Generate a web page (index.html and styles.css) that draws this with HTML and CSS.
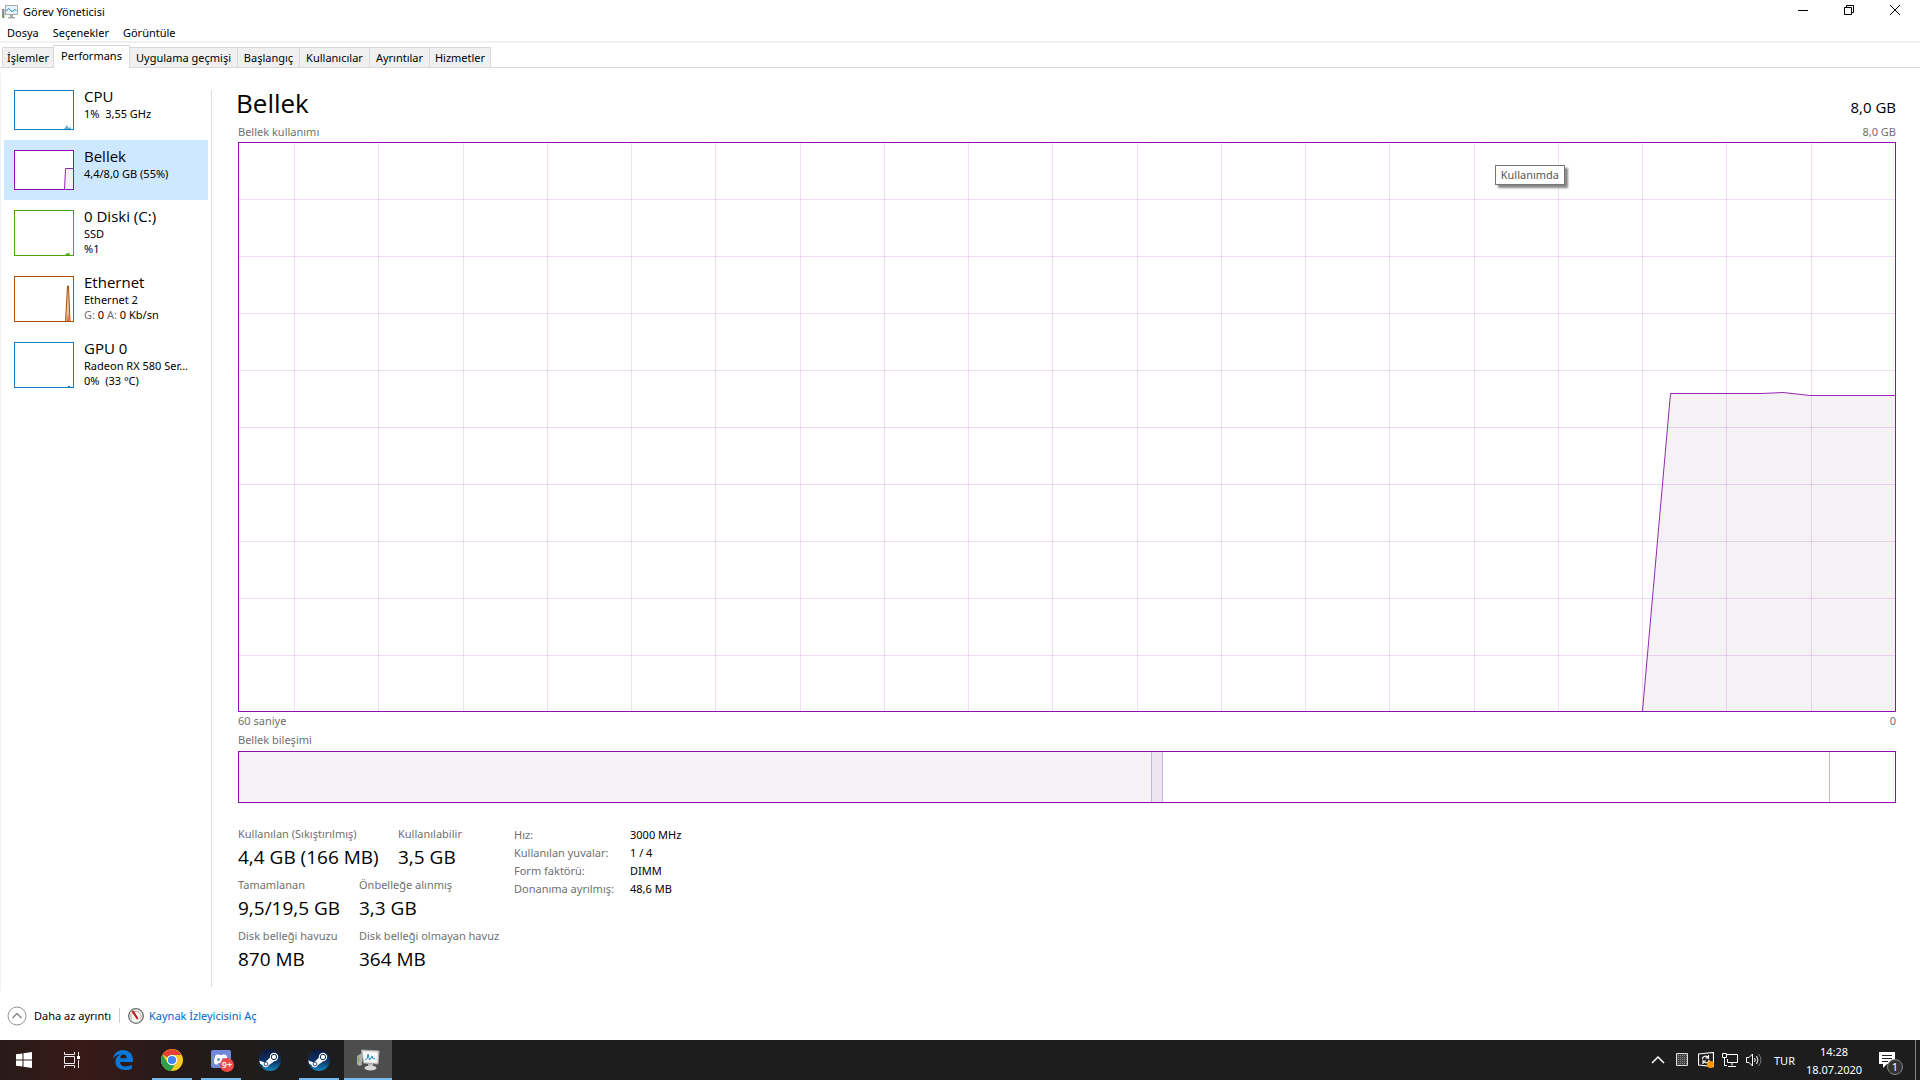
FILE: index.html
```html
<!DOCTYPE html>
<html lang="tr">
<head>
<meta charset="utf-8">
<title>Görev Yöneticisi</title>
<link rel="stylesheet" href="styles.css">
</head>
<body>
<div class="window">
  <header class="titlebar">
    <svg class="app-icon" viewBox="0 0 16 14"><path d="M0 4h2.500v9H0z" fill="#8a9094"/><path d="M.5 10h1.500v2H.5z" fill="#63b345"/><path d="M3.500.5h12v9h-12z" fill="#e6f4fc" stroke="#a5aaac"/><path d="M4.500 6l2-2.500 2 1.500 2 2 2-2.500 2 1" fill="none" stroke="#2384b8"/><path d="M8 10h3v2h2v1.500H6V12h2z" fill="#a5aaac"/></svg>
    <h1 class="window-title">Görev Yöneticisi</h1>
    <div class="window-controls">
      <button class="control" aria-label="Simge durumuna küçült"><svg viewBox="0 0 12 12"><path d="M1 6.500h10" stroke="#000"/></svg></button>
      <button class="control" aria-label="Önceki boyut"><svg viewBox="0 0 12 12"><path d="M1.500 3.500h7v7h-7zM3.500 3.500v-2h7v7h-2" fill="none" stroke="#000"/></svg></button>
      <button class="control" aria-label="Kapat"><svg viewBox="0 0 12 12"><path d="M1 1l10 10M11 1L1 11" stroke="#000"/></svg></button>
    </div>
  </header>
  <nav class="menubar">
    <button>Dosya</button><button>Seçenekler</button><button>Görüntüle</button>
  </nav>
  <div class="tabs" role="tablist">
    <button class="tab tab-processes" role="tab">İşlemler</button>
    <button class="tab tab-performance active" role="tab" aria-selected="true">Performans</button>
    <button class="tab tab-history" role="tab">Uygulama geçmişi</button>
    <button class="tab tab-startup" role="tab">Başlangıç</button>
    <button class="tab tab-users" role="tab">Kullanıcılar</button>
    <button class="tab tab-details" role="tab">Ayrıntılar</button>
    <button class="tab tab-services" role="tab">Hizmetler</button>
  </div>
  <div class="content">
    <aside class="sidebar">
      <button class="resource">
        <svg class="thumb cpu" viewBox="1 1 58 38"><path d="M50 39l2-3 1-1 1 2 1 1 2-1v2z" fill="#6fb0d9"/></svg>
        <span class="info"><span class="name">CPU</span><span>1%&nbsp; 3,55 GHz</span></span>
      </button>
      <button class="resource selected">
        <svg class="thumb memory" viewBox="1 1 58 38"><path d="M50.500 40l1-21.500H61V40" fill="#f4f2f4" stroke="#9528b4"/></svg>
        <span class="info"><span class="name">Bellek</span><span>4,4/8,0 GB (55%)</span></span>
      </button>
      <button class="resource">
        <svg class="thumb tall disk" viewBox="1 1 58 44"><path d="M51 45l2-2 1 1 1-2 1 3z" fill="#4da60c"/></svg>
        <span class="info"><span class="name">0 Diski (C:)</span><span>SSD</span><span>%1</span></span>
      </button>
      <button class="resource">
        <svg class="thumb tall ethernet" viewBox="1 1 58 44"><path d="M51.500 46l2-36h1l1.500 36" fill="#e5c8ae" stroke="#a74f01"/><path d="M53 45l1-8 1 8z" fill="#f05a28"/></svg>
        <span class="info"><span class="name">Ethernet</span><span>Ethernet 2</span><span><i>G:</i> 0 <i>A:</i> 0 Kb/sn</span></span>
      </button>
      <button class="resource">
        <svg class="thumb tall gpu" viewBox="1 1 58 44"><path d="M54 44h2v1h-2z" fill="#117dbb"/></svg>
        <span class="info"><span class="name">GPU 0</span><span>Radeon RX 580 Ser...</span><span>0%&nbsp; (33 °C)</span></span>
      </button>
    </aside>
    <main class="detail">
      <div class="heading"><h2>Bellek</h2><span class="capacity">8,0 GB</span></div>
      <div class="caption chart-caption"><span>Bellek kullanımı</span><span>8,0 GB</span></div>
      <div class="chart-wrap">
        <svg class="chart" viewBox="0 0 1656 568" preserveAspectRatio="none">
          <path class="area" d="M1403.500 568L1431.500 250.500H1523L1544 249.500 1571 252.500H1656V568z"/>
          <path class="grid" d="M0 56.500H1656M0 113.500H1656M0 170.500H1656M0 227.500H1656M0 284.500H1656M0 341.500H1656M0 398.500H1656M0 455.500H1656M0 512.500H1656"/>
          <path class="grid" d="M55.500 0V568M139.500 0V568M224.500 0V568M308.500 0V568M392.500 0V568M476.500 0V568M561.500 0V568M645.500 0V568M729.500 0V568M813.500 0V568M898.500 0V568M982.500 0V568M1066.500 0V568M1150.500 0V568M1235.500 0V568M1319.500 0V568M1403.500 0V568M1487.500 0V568M1572.500 0V568"/>
          <path class="line" d="M1403.500 568L1431.500 250.500H1523L1544 249.500 1571 252.500H1656"/>
        </svg>
        <div class="tooltip" role="tooltip">Kullanımda</div>
      </div>
      <div class="caption axis"><span>60 saniye</span><span>0</span></div>
      <div class="caption composition-caption">Bellek bileşimi</div>
      <div class="composition"><div class="in-use"></div><div class="modified"></div><div class="standby"></div><div class="free"></div></div>
      <div class="stats">
        <div class="figures">
          <dl class="figure-row"><div class="wide"><dt>Kullanılan (Sıkıştırılmış)</dt><dd>4,4 GB (166 MB)</dd></div><div><dt>Kullanılabilir</dt><dd>3,5 GB</dd></div></dl>
          <dl class="figure-row"><div><dt>Tamamlanan</dt><dd>9,5/19,5 GB</dd></div><div><dt>Önbelleğe alınmış</dt><dd>3,3 GB</dd></div></dl>
          <dl class="figure-row"><div><dt>Disk belleği havuzu</dt><dd>870 MB</dd></div><div><dt>Disk belleği olmayan havuz</dt><dd>364 MB</dd></div></dl>
        </div>
        <table class="specs">
          <tr><th scope="row">Hız:</th><td>3000 MHz</td></tr>
          <tr><th scope="row">Kullanılan yuvalar:</th><td>1 / 4</td></tr>
          <tr><th scope="row">Form faktörü:</th><td>DIMM</td></tr>
          <tr><th scope="row">Donanıma ayrılmış:</th><td>48,6 MB</td></tr>
        </table>
      </div>
    </main>
  </div>
  <footer class="statusbar">
    <button class="fewer"><svg viewBox="0 0 20 20"><circle cx="10" cy="10" r="9" fill="none" stroke="#949494"/><path d="M5.500 12L10 7.500l4.500 4.500" fill="none" stroke="#8a8a8a" stroke-width="1.500"/></svg>Daha az ayrıntı</button>
    <a class="monitor" href="#"><svg viewBox="0 0 16 16"><circle cx="8" cy="8" r="7.300" fill="#f7f5f2" stroke="#6d6d6d" stroke-width="1.300"/><path d="M4 11.500a5 5 0 1 1 8 0" fill="none" stroke="#b9a99b"/><path d="M3.500 3.500l2-1 5 8-1.500 1z" fill="#c5131b"/></svg>Kaynak İzleyicisini Aç</a>
  </footer>
</div>
<div class="taskbar">
  <button class="task" aria-label="Başlat"><svg viewBox="0 0 16 16" width="16" height="16" fill="#fff"><path d="M0 2.300L6.500 1.400V7.500H0zM7.500 1.200L16 0v7.500H7.500zM0 8.500h6.500v6.100L0 13.700zM7.500 8.500H16V16l-8.500-1.200z"/></svg></button>
  <button class="task" aria-label="Görev Görünümü"><svg viewBox="0 0 16 16" width="16" height="16" fill="none" stroke="#eee"><path d="M.5 0v2.500h10V0M.5 16v-2.500h10V16M.5 4.500h10v7H.5zM14.500 0v4M14.500 8v8"/><path d="M13 4h3v3h-3z" fill="#fff" stroke="none"/></svg></button>
  <div class="apps">
    <button class="task" aria-label="Edge"><svg viewBox="0 0 20 20" width="20" height="20"><path d="M0 9C.8 3.500 4.600 0 10 0c6.200 0 10 4.300 10 10v2H7c.2 3.100 2.600 4.500 5.800 4.500 2.300 0 4.300-.7 6-1.700v4.100C17 19.700 14.600 20 12 20c-5.400 0-9.600-2.900-9.600-8.200 0-3.300 2-6 5-7.200C4.300 4.700 1.700 6.200 0 9zm7.200-.8h6.400C13.600 6 12.400 4.600 10.500 4.600S7.500 6 7.200 8.200z" fill="#0a78d7"/></svg></button>
    <button class="task running" aria-label="Chrome"><svg viewBox="0 0 22 22" width="22" height="22"><circle cx="11" cy="11" r="11" fill="#fbc926"/><path d="M11 11L1.500 5.500A11 11 0 0 1 20.500 6H11z" fill="#e34133"/><path d="M1.500 5.500A11 11 0 0 0 10 22l5-8.600-8.500.4z" fill="#2ba14b"/><circle cx="11" cy="11" r="5.200" fill="#fff"/><circle cx="11" cy="11" r="4.100" fill="#4285f4"/></svg></button>
    <button class="task running" aria-label="Discord"><span class="discord"><svg viewBox="0 0 20 20" width="20" height="20"><path d="M2 0h16a2 2 0 0 1 2 2v18l-3-2H2a2 2 0 0 1-2-2V2a2 2 0 0 1 2-2z" fill="#7189d8"/><path d="M3 13c0-4 1-7 2-8 2-1 3-1 3 0h4c0-1 1-1 3 0 1 1 2 4 2 8-2 2-4 2-4 0H7c0 2-2 2-4 0z" fill="#fff"/><circle cx="7.500" cy="9.500" r="1.500" fill="#7189d8"/><circle cx="12.500" cy="9.500" r="1.500" fill="#7189d8"/></svg><span class="badge">9+</span></span></button>
    <button class="task" aria-label="Steam"><svg viewBox="0 0 22 22" width="22" height="22"><use href="#steam"/></svg></button>
    <button class="task running" aria-label="Steam"><svg viewBox="0 0 22 22" width="22" height="22"><defs><linearGradient id="steam-blue" x2="0" y2="1"><stop stop-color="#10173c"/><stop offset=".55" stop-color="#0b3464"/><stop offset="1" stop-color="#1287bf"/></linearGradient></defs><g id="steam"><circle cx="11" cy="11" r="11" fill="url(#steam-blue)"/><path d="M.3 11.500L6 13.500l5-5 4 4-5 3.500a3.400 3.400 0 0 1-6.500 0L1 14.500z" fill="#fff"/><circle cx="15" cy="8" r="4.200" fill="#fff"/><circle cx="15" cy="8" r="2.700" fill="#fff" stroke="#15315b"/><circle cx="7" cy="15" r="1.900" fill="none" stroke="#15315b" stroke-width=".8"/></g></svg></button>
    <button class="task running active" aria-label="Görev Yöneticisi"><svg viewBox="0 0 24 22" width="24" height="22"><path d="M1 7l5-3v12l-3 1-2-2z" fill="#a9adab"/><path d="M2 8h1v5H2z" fill="#55b63c"/><path d="M5.500 1l17.500 1-1 13-14.500-1z" fill="#e7e7e5" stroke="#aaa"/><path d="M7.500 3l13.500 1-1 9-11.500-1z" fill="#f8fcff"/><path d="M9 11l2-1 1-5 1.500 6 1.500-2 1-2 1 3 2-1" fill="none" stroke="#2789bf"/><path d="M12 15h5v2h-5z" fill="#b8b8b6"/><ellipse cx="14.500" cy="19" rx="6" ry="2.500" fill="#d8d8d6"/></svg></button>
  </div>
  <div class="tray">
    <button class="tray-icon" aria-label="Gizli simgeler"><svg viewBox="0 0 16 16"><path d="M2 11l6-6 6 6" fill="none" stroke="#fff" stroke-width="1.500"/></svg></button>
    <button class="tray-icon" aria-label="Aygıt"><svg viewBox="0 0 16 16"><path d="M2.500 1.500h11v12h-11z" fill="#444" stroke="#ddd"/><path d="M4.500 3v10M6.500 3v10M8.500 3v10M10.500 3v10M12.500 3v10" stroke="#8a8a8a" stroke-dasharray="1 1"/></svg></button>
    <button class="tray-icon" aria-label="Güncelleştirme"><svg viewBox="0 0 16 16"><path d="M.5 2L15.500.5v14L.5 13zM4.500 7c0-3 4-4 6-1V3M10.500 6h-3M11 8c0 3-4 4-6 1v3M5 9h3" fill="none" stroke="#fff" stroke-width="1.200"/><circle cx="12.500" cy="12.500" r="3.500" fill="#ff9800"/></svg></button>
    <button class="tray-icon" aria-label="Ağ"><svg viewBox="0 0 16 16"><path d="M4.500 2.500h11v8h-10V7M10 10.500v3M6 14.500h8M.5 1.500h4v4h-4zM2.500 5.500v8H5" fill="none" stroke="#fff"/></svg></button>
    <button class="tray-icon" aria-label="Ses"><svg viewBox="0 0 16 16"><path d="M.5 5.500H3L6.500 2v12L3 10.500H.5zM8.500 6q1.500 2 0 4M10.500 4q3 4 0 8" fill="none" stroke="#fff"/><path d="M12.500 2q5 6 0 12" fill="none" stroke="#777"/></svg></button>
    <button class="language">TUR</button>
    <button class="clock"><span>14:28</span><span>18.07.2020</span></button>
    <button class="notifications" aria-label="Bildirimler"><svg viewBox="0 0 16 16" width="16" height="16"><path d="M0 0h16v12H8l-4 4v-4H0z" fill="#fff"/><path d="M3 3.500h10M3 6.500h10M3 9.500h6" stroke="#222"/></svg><span class="count">1</span></button>
    <button class="show-desktop" aria-label="Masaüstünü göster"></button>
  </div>
</div>
</body>
</html>
```
FILE: styles.css
```css
* { box-sizing: border-box; }
body { margin: 0; min-height: 100vh; display: flex; flex-direction: column; background: #fff; color: #000; font: 11px/15px "Noto Sans", "Open Sans", sans-serif; }
button { margin: 0; padding: 0; border: 0; background: none; color: inherit; font: inherit; text-align: left; }
h1, h2, dl, dd { margin: 0; font-weight: 400; }
svg { display: block; flex: none; }

.window { flex: 1; display: flex; flex-direction: column; }
.titlebar { display: flex; align-items: center; height: 23px; padding-right: 2px; padding-left: 2px; gap: 5px; }
.app-icon { width: 16px; height: 14px; }
.window-title { flex: 1; font-size: 11px; }
.window-controls { display: flex; align-self: flex-start; }
.control { display: flex; justify-content: center; width: 46px; height: 20px; padding-top: 4px; }
.control svg { width: 12px; height: 12px; }
.menubar { display: flex; align-items: center; gap: 14px; height: 20px; padding-left: 7px; border-bottom: 2px solid #f0f0f0; }
.tabs { display: flex; align-items: flex-end; height: 25px; padding-left: 2px; border-bottom: 1px solid #d9d9d9; }
.tab { height: 20px; background: #f0f0f0; border: 1px solid #d9d9d9; border-width: 1px 1px 0 0; text-align: center; white-space: nowrap; }
.tab.active { height: 23px; margin-bottom: -1px; padding-bottom: 3px; background: #fff; border-left-width: 1px; }
.tab-processes { width: 51px; border-width: 1px 0 0 1px; }
.tab-performance { width: 77px; }
.tab-history { width: 108px; }
.tab-startup { width: 62px; }
.tab-users { width: 70px; }
.tab-details { width: 60px; }
.tab-services { width: 61px; }

.content { flex: 1; display: flex; margin-top: 5px; border-left: 1px solid #f0f0f0; }
.sidebar { width: 211px; margin: 17px 0 4px; padding-right: 3px; padding-left: 3px; border-right: 1px solid #dcdcdc; }
.resource { display: flex; align-items: flex-start; gap: 10px; width: 100%; padding: 10px; }
.resource:first-child { padding-top: 0; }
.resource.selected { background: #cde8ff; }
.thumb { width: 60px; height: 40px; border: 1px solid; background: #fff; }
.thumb.tall { height: 46px; }
.cpu, .gpu { color: #117dbb; }
.memory { color: #8b12ae; }
.disk { color: #4da60c; }
.ethernet { color: #a74f01; }
.info { display: flex; flex-direction: column; height: 40px; white-space: nowrap; }
.name { margin-top: -2px; padding-bottom: 2px; font-size: 15px; line-height: 16px; }
.info i { color: #707070; font-style: normal; }
.name, h2, .capacity, dd { font-family: "Open Sans", "Noto Sans", sans-serif; }

.detail { flex: 1; padding: 12px 24px 0 26px; }
.heading { display: flex; justify-content: space-between; height: 40px; }
h2 { margin-left: -2px; font-size: 26px; line-height: 36px; }
.capacity { padding-top: 12px; font-size: 15px; line-height: 20px; }
.caption { color: #707070; font-size: 11px; line-height: 14px; }
.chart-caption, .axis { display: flex; justify-content: space-between; }
.chart-caption { padding-bottom: 3px; }
.chart-wrap { position: relative; }
.chart { width: 100%; height: 570px; border: 1px solid #8b12ae; }
.area { fill: #f4f2f4; }
.grid { fill: none; stroke: #8b12ae; stroke-opacity: .14; }
.line { fill: none; stroke: #9528b4; }
.tooltip { position: absolute; top: 23px; right: 331px; padding: 0 5px; border: 1px solid #767676; background: #fff; color: #575757; line-height: 18px; box-shadow: 3px 3px 2px #888; }
.axis { padding-top: 2px; }
.composition-caption { padding: 5px 0 4px; }
.composition { display: flex; height: 52px; border: 1px solid #8b12ae; }
.in-use { flex: 914; background: #f4f2f4; }
.modified { flex: 10; background: #ede5f1; border: 1px solid #d0b0dc; border-width: 0 1px; }
.standby { flex: 667; }
.free { flex: 65; border-left: 1px solid #d0b0dc; }

.stats { display: flex; padding-top: 23px; }
.figures { width: 276px; }
.figure-row { display: flex; height: 51px; white-space: nowrap; }
.figure-row > div { width: 121px; }
.figure-row > .wide { width: 160px; }
.figure-row > .wide + div { width: 116px; }
dt { color: #707070; line-height: 16px; }
dd { font-size: 19px; line-height: 30px; }
.specs { align-self: flex-start; border-collapse: collapse; }
.specs th, .specs td { padding: 0; line-height: 18px; text-align: left; white-space: nowrap; }
.specs th { width: 116px; color: #707070; font-weight: 400; }

.statusbar { display: flex; align-items: center; height: 49px; padding-left: 7px; }
.fewer, .monitor { display: flex; align-items: center; }
.fewer { gap: 7px; padding-right: 8px; border-right: 1px solid #d0d0d0; }
.fewer svg { width: 20px; height: 20px; margin: -3px 0; }
.monitor { gap: 5px; margin-left: 8px; color: #0066cc; text-decoration: none; }
.monitor svg { width: 16px; height: 16px; }

.taskbar { display: flex; height: 40px; background: linear-gradient(90deg, #281b1a, #381a18 80px, #241a19 180px, #1d1d1d 280px); color: #fff; }
.task { display: flex; align-items: center; justify-content: center; position: relative; width: 48px; height: 40px; }
.apps { display: flex; gap: 1px; margin-left: 3px; }
.running::after { content: ""; position: absolute; right: 4px; bottom: 0; left: 4px; height: 2px; background: #76b9ed; }
.running.active { background: #4d4d4d; }
.running.active::after { right: 0; left: 0; }
.discord { position: relative; }
.badge { position: absolute; top: 8px; left: 9px; width: 14px; height: 14px; border-radius: 50%; background: #f04747; font-size: 9px; font-weight: 600; line-height: 13px; text-align: center; }
.tray { display: flex; align-items: center; margin-left: auto; }
.tray-icon { width: 24px; padding: 0 4px; }
.tray-icon svg { width: 16px; height: 16px; }
.language { width: 36px; padding-left: 8px; }
.clock { display: flex; flex-direction: column; width: 64px; gap: 3px; text-align: center; }
.notifications { position: relative; width: 49px; padding-left: 13px; }
.count { position: absolute; top: 7px; left: 21px; width: 16px; height: 16px; border: 1px solid #888; border-radius: 50%; background: #333; line-height: 14px; text-align: center; }
.show-desktop { width: 5px; height: 40px; border-left: 1px solid #888; }
```
